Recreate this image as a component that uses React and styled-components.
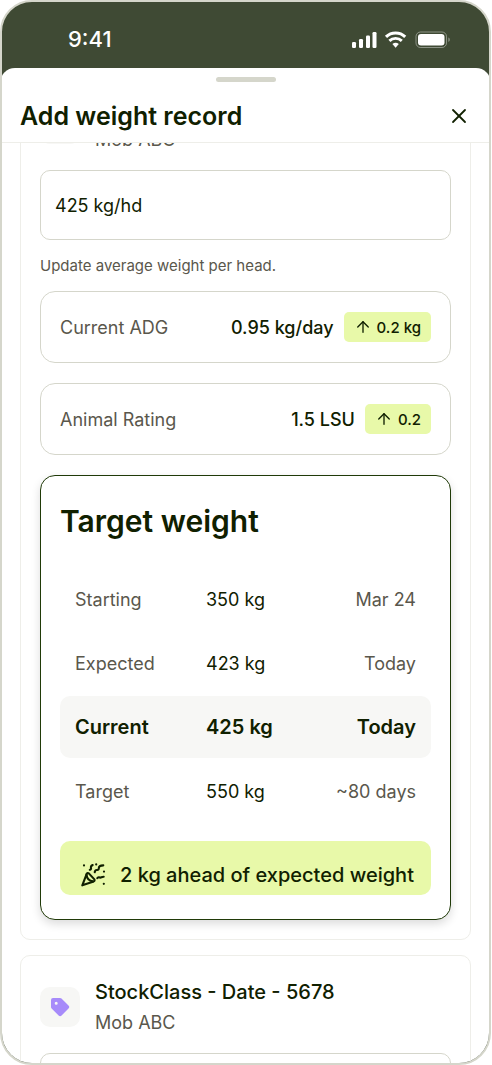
import React, { useLayoutEffect, useRef } from "react";
import styled, { createGlobalStyle } from "styled-components";
import { ArrowUp, X } from "lucide-react";

const targets = [
    { label: "Starting", weight: "350 kg", date: "Mar 24" },
    { label: "Expected", weight: "423 kg", date: "Today" },
    { label: "Current", weight: "425 kg", date: "Today", current: true },
    { label: "Target", weight: "550 kg", date: "~80 days" },
];

const StatusIcons = () => (
    <svg width="98" height="18" viewBox="0 0 98 18" aria-hidden="true">
        <g fill="#fff">
            <rect x="0" y="11" width="4" height="6" rx="1.2" />
            <rect x="7" y="8" width="4" height="9" rx="1.2" />
            <rect x="14" y="4.5" width="4" height="12.5" rx="1.2" />
            <rect x="20.5" y="1" width="4" height="16" rx="1.2" />
            <rect x="66" y="3" width="26.5" height="11.5" rx="3" />
            <path d="M96.3 6.500v4.400c1-.4 1.500-1.200 1.500-2.200s-.5-1.800-1.500-2.200z" opacity=".4" />
            <path d="M40.400 13.100a4.800 4.800 0 0 1 6.400 0l-3.200 3.600z" />
        </g>
        <g fill="none" stroke="#fff">
            <path d="M34 5.900a13.900 13.900 0 0 1 19.200 0" strokeWidth="3.100" />
            <path d="M37.400 9.900a8.900 8.900 0 0 1 12.400 0" strokeWidth="2.900" />
            <rect x="64" y="1" width="30.500" height="15.500" rx="4.500" opacity=".4" />
        </g>
    </svg>
);

const PartyIcon = () => (
    <svg width="26" height="26" viewBox="0 0 26 26" fill="none" stroke="#102000" strokeWidth="2.100" strokeLinecap="round" strokeLinejoin="round" aria-hidden="true">
        <path d="M2.300 23.300 6.700 11.800c.4-.9 1.400-1 2.100-.4l5.400 5.700c.7.8.4 1.900-.5 2.300z" />
        <path d="M6.500 12.600c.3 3.200 2.700 6.200 6.400 6.800" />
        <path d="M9.800 7.700c1-.2 1.500-.9 1.200-1.800-.3-1 .3-2.200 1.700-2.900" />
        <path d="M14.700 10.200c.3-1.700 1.200-2.300 2.300-2.200 1.300.1 1.900-.6 1.800-1.800 0-1.600 1.300-2.700 4.500-2.800" />
        <path d="M17.300 16.200c.8-1 1.700-1.200 2.600-.7 1.100.5 1.800-.9 3.800-.8" />
        <path d="M4 3.400h.01M16.200 2.400h.01M24 9.600h.01M23.800 21.800h.01" strokeWidth="2.200" />
    </svg>
);

const TagIcon = () => (
    <svg width="20" height="20" viewBox="0 0 20 20" aria-hidden="true">
        <path fill="#a78bfa" fillRule="evenodd" d="M3 1h7c.6 0 1.100.2 1.500.6l7 7a2.100 2.100 0 0 1 0 3l-6.900 6.900a2.100 2.100 0 0 1-3 0l-7-7A2.100 2.100 0 0 1 1 10V3a2 2 0 0 1 2-2zm3.200 3.700a1.500 1.500 0 1 0 0 3 1.500 1.500 0 0 0 0-3z" />
    </svg>
);

const RecordHeader = ({ title, mob }) => (
    <CardHeader>
        <TagBox>
            <TagIcon />
        </TagBox>
        <div>
            <CardTitle>{title}</CardTitle>
            <CardSubtitle>{mob}</CardSubtitle>
        </div>
    </CardHeader>
);

const Metric = ({ label, value, change }) => (
    <MetricBox>
        <MetricLabel>{label}</MetricLabel>
        <MetricValue>{value}</MetricValue>
        <Badge>
            <ArrowUp size={18} strokeWidth={1.8} />
            {change}
        </Badge>
    </MetricBox>
);

const App = () => {
    const listRef = useRef(null);

    // open with the weight field of the first record in view
    useLayoutEffect(() => {
        listRef.current.scrollTop = 87;
    }, []);

    return (
        <>
            <GlobalStyle />
            <Phone>
                <StatusBar>
                    <Time>9:41</Time>
                    <StatusIcons />
                </StatusBar>
                <Sheet>
                    <Handle />
                    <SheetHeader>
                        <SheetTitle>Add weight record</SheetTitle>
                        <CloseButton type="button" aria-label="Close">
                            <X size={24} strokeWidth={1.8} />
                        </CloseButton>
                    </SheetHeader>
                    <List ref={listRef}>
                        <Card>
                            <RecordHeader title="StockClass - Date - 1234" mob="Mob ABC" />
                            <WeightInput id="weight-1" defaultValue="425 kg/hd" />
                            <Hint htmlFor="weight-1">Update average weight per head.</Hint>
                            <Metrics>
                                <Metric label="Current ADG" value="0.95 kg/day" change="0.2 kg" />
                                <Metric label="Animal Rating" value="1.5 LSU" change="0.2" />
                                <TargetCard>
                                    <TargetTitle>Target weight</TargetTitle>
                                    <TargetTable>
                                        <tbody>
                                            {targets.map((row) => (
                                                <TargetRow key={row.label} $current={row.current}>
                                                    <th scope="row">{row.label}</th>
                                                    <td>{row.weight}</td>
                                                    <td>{row.date}</td>
                                                </TargetRow>
                                            ))}
                                        </tbody>
                                    </TargetTable>
                                    <Banner>
                                        <PartyIcon />
                                        2 kg ahead of expected weight
                                    </Banner>
                                </TargetCard>
                            </Metrics>
                        </Card>
                        <Card>
                            <RecordHeader title="StockClass - Date - 5678" mob="Mob ABC" />
                            <WeightInput id="weight-2" />
                            <Hint htmlFor="weight-2">Update average weight per head.</Hint>
                        </Card>
                    </List>
                </Sheet>
            </Phone>
        </>
    );
};

export default App;

// Styled components
const GlobalStyle = createGlobalStyle`
    * {
        box-sizing: border-box;
    }

    body {
        margin: 0;
        padding-right: 1px;
        background: #fff;
        color: #102000;
        font-family: Inter, sans-serif;
        font-size: 18px;
    }
`;

const Phone = styled.main`
    display: flex;
    flex-direction: column;
    height: 100vh;
    border: 2px solid #d5d6cb;
    border-radius: 32px;
    background: #3f4a34;
    overflow: hidden;
`;

const StatusBar = styled.div`
    display: flex;
    align-items: center;
    justify-content: space-between;
    height: 66px;
    padding: 10px 39px 0 66px;
    flex-shrink: 0;
`;

const Time = styled.span`
    padding-bottom: 3px;
    color: #fff;
    font-size: 22px;
    font-weight: 500;
`;

const Sheet = styled.section`
    display: flex;
    flex-direction: column;
    flex: 1;
    min-height: 0;
    margin: 0 -2px;
    border-radius: 15px 15px 0 0;
    background: #fff;
`;

const Handle = styled.div`
    width: 60px;
    height: 5px;
    margin: 9px auto 0;
    border-radius: 3px;
    background: #d5d6cb;
    flex-shrink: 0;
`;

const SheetHeader = styled.header`
    display: flex;
    align-items: center;
    justify-content: space-between;
    height: 61px;
    padding: 8px 20px 0;
    border-bottom: 1px solid #eeeee9;
    flex-shrink: 0;
`;

const SheetTitle = styled.h1`
    margin: 0;
    font-size: 25px;
    line-height: 32px;
    font-weight: 600;
`;

const CloseButton = styled.button`
    display: flex;
    margin: 0;
    padding: 0;
    border: 0;
    background: none;
    color: #102000;
    cursor: pointer;
`;

const List = styled.div`
    display: flex;
    flex-direction: column;
    gap: 15px;
    flex: 1;
    min-height: 0;
    padding: 16px 20px;
    overflow-y: auto;
    scrollbar-width: none;
`;

const Card = styled.article`
    flex-shrink: 0;
    padding: 19px;
    border: 1px solid #eeeee9;
    border-radius: 10px;
`;

const CardHeader = styled.header`
    display: flex;
    align-items: center;
    gap: 15px;
    height: 63px;
    margin-bottom: 15px;
`;

const TagBox = styled.div`
    display: flex;
    align-items: center;
    justify-content: center;
    width: 40px;
    height: 40px;
    border-radius: 10px;
    background: #f7f7f5;
`;

const CardTitle = styled.h2`
    margin: 0;
    font-size: 20px;
    line-height: 32px;
    font-weight: 500;
`;

const CardSubtitle = styled.p`
    margin: 0;
    color: #5a574c;
    font-size: 18px;
    line-height: 30px;
`;

const WeightInput = styled.input`
    display: block;
    width: 100%;
    height: 70px;
    padding: 0 14px;
    border: 1px solid #d5d6cb;
    border-radius: 10px;
    background: #fff;
    color: #102000;
    font: inherit;
`;

const Hint = styled.label`
    display: block;
    margin: 16px 0 15px;
    color: #5a574c;
    font-size: 15px;
    line-height: 20px;
`;

const Metrics = styled.div`
    display: flex;
    flex-direction: column;
    gap: 20px;
`;

const MetricBox = styled.div`
    display: flex;
    align-items: center;
    height: 72px;
    padding: 0 19px;
    border: 1px solid #d5d6cb;
    border-radius: 15px;
`;

const MetricLabel = styled.span`
    flex: 1;
    color: #5a574c;
`;

const MetricValue = styled.span`
    margin-right: 10px;
    font-weight: 500;
`;

const Badge = styled.span`
    display: flex;
    align-items: center;
    gap: 5px;
    height: 30px;
    padding: 0 10px;
    border-radius: 5px;
    background: #e8f9a9;
    font-size: 15px;
    font-weight: 500;
`;

const TargetCard = styled.section`
    padding: 24px 19px;
    border: 1px solid #203a08;
    border-radius: 15px;
    background: #fff;
    box-shadow: 0 4px 10px rgba(0, 0, 0, 0.14);
`;

const TargetTitle = styled.h3`
    margin: 0 0 24px;
    font-size: 30px;
    line-height: 42px;
    font-weight: 600;
`;

const TargetTable = styled.table`
    width: 100%;
    table-layout: fixed;
    border-spacing: 0 2px;
`;

const TargetRow = styled.tr`
    height: 62px;
    background: ${(props) => (props.$current ? "#f7f7f5" : "none")};
    font-size: ${(props) => (props.$current ? "20px" : "18px")};
    font-weight: ${(props) => (props.$current ? 600 : 400)};

    th,
    td {
        padding: 0 15px;
        font-weight: inherit;
        text-align: left;
    }

    th {
        width: 131px;
        border-radius: 10px 0 0 10px;
    }

    td:last-child {
        border-radius: 0 10px 10px 0;
        text-align: right;
    }

    th,
    td:last-child {
        color: ${(props) => (props.$current ? "#102000" : "#5a574c")};
    }
`;

const Banner = styled.p`
    display: flex;
    align-items: center;
    gap: 14px;
    height: 54px;
    margin: 17px 0 0;
    padding: 13px 15px 0 20px;
    border-radius: 10px;
    background: #e8f9a9;
    font-size: 20px;
    font-weight: 500;
    white-space: nowrap;
`;
